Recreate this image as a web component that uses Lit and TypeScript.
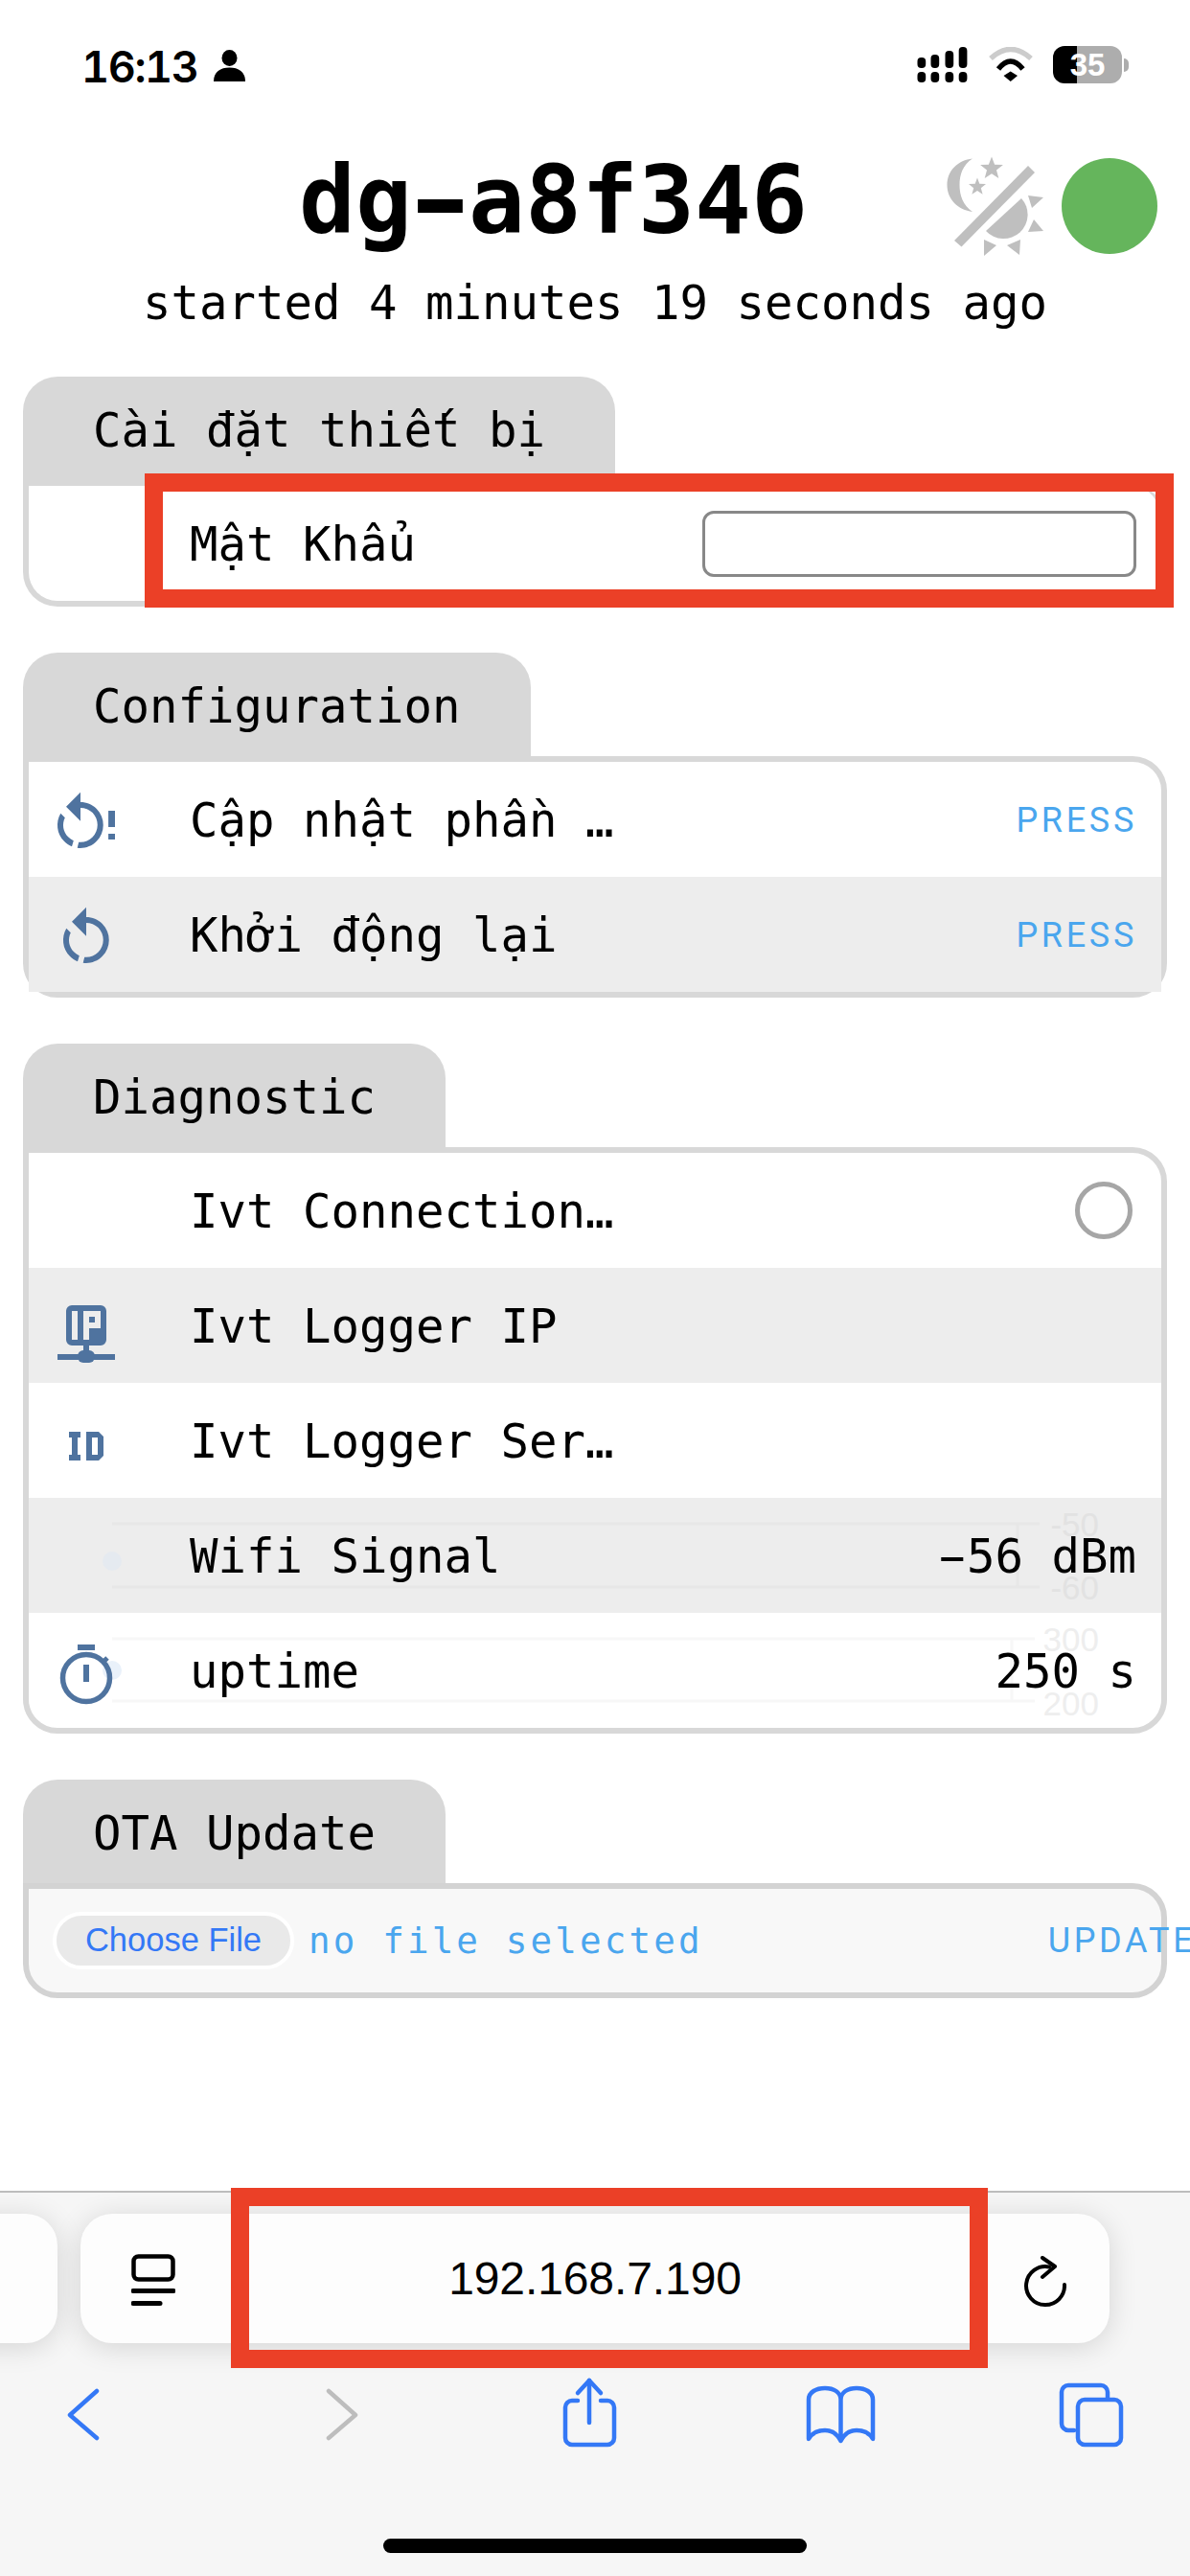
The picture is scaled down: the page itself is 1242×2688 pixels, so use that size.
import { LitElement, html, css, svg } from "lit";
import { customElement } from "lit/decorators.js";

const star = (cx: number, cy: number, r: number) => {
  const pts: string[] = [];
  for (let i = 0; i < 10; i++) {
    const rad = i % 2 ? r * 0.42 : r;
    const a = -Math.PI / 2 + (i * Math.PI) / 5;
    pts.push(`${(cx + rad * Math.cos(a)).toFixed(1)},${(cy + rad * Math.sin(a)).toFixed(1)}`);
  }
  return pts.join(" ");
};

const RESTART =
  "M12,4C14.1,4 16.1,4.8 17.6,6.3C20.7,9.4 20.7,14.5 17.6,17.6C15.8,19.5 13.3,20.2 10.9,19.9L11.4,17.9C13.1,18.1 14.9,17.5 16.2,16.2C18.5,13.9 18.5,10.1 16.2,7.7C15.1,6.6 13.5,6 12,6V10.6L7,5.6L12,0.6V4M6.3,17.6C3.7,15 3.3,11 5.1,7.9L6.6,9.4C5.5,11.6 5.9,14.4 7.8,16.2C8.3,16.7 8.9,17.1 9.6,17.4L9,19.4C8,19 7.1,18.4 6.3,17.6Z";

const icons: Record<string, unknown> = {
  restartAlert: html`<svg class="ic" viewBox="0 0 24 24"><path transform="translate(-2 0)" d=${RESTART}/><path d="M19.7 7H22V12.7H19.7ZM19.7 15H22V17H19.7Z"/></svg>`,
  restart: html`<svg class="ic" viewBox="0 0 24 24"><path d=${RESTART}/></svg>`,
  ip: html`<svg class="ic" viewBox="0 0 72 72"><path fill-rule="evenodd" d="M21 9H51A6 6 0 0 1 57 15V45A6 6 0 0 1 51 51H21A6 6 0 0 1 15 45V15A6 6 0 0 1 21 9ZM21 15V45H27V15ZM33 15V45H39V33H51V15ZM39 21H45V27H39Z"/><rect x="33" y="50" width="6" height="10"/><rect x="6" y="60" width="60" height="6"/><rect x="27" y="56" width="18" height="13" rx="6"/></svg>`,
  id: html`<svg class="ic" viewBox="0 0 72 72"><path fill-rule="evenodd" d="M18 21H30V27H27V45H30V51H18V45H21V27H18ZM36 21H49L54 26V46L49 51H36ZM42 27V45H48V27Z"/></svg>`,
  timer: html`<svg class="ic" viewBox="0 0 72 72"><rect x="27" y="3" width="18" height="6"/><rect x="33" y="24" width="6" height="18"/><circle cx="36" cy="38" r="24.5" fill="none" stroke="#4F739F" stroke-width="5.5"/><path d="M53 22L58 17" stroke="#4F739F" stroke-width="5" fill="none"/></svg>`,
};

const wifiChart = svg`<line x1="87" x2="1055" y1="27" y2="27"/><line x1="87" x2="1055" y1="93" y2="93"/><line x1="1032" x2="1032" y1="27" y2="93"/><circle cx="87" cy="66" r="10" fill="#E5EAF0"/><text x="1117" y="40">-50</text><text x="1117" y="106">-60</text>`;
const upChart = svg`<line x1="87" x2="1050" y1="27" y2="27"/><line x1="87" x2="1050" y1="92" y2="92"/><line x1="1026" x2="1026" y1="27" y2="92"/><circle cx="87" cy="60" r="10" fill="#E9F1FA"/><text x="1117" y="40">300</text><text x="1117" y="107">200</text>`;

@customElement("app-root")
export class AppRoot extends LitElement {
  static styles = css`
    :host {
      display: flex;
      flex-direction: column;
      width: 1242px;
      height: 2688px;
      overflow: hidden;
      background: #fff;
      color: #000;
      font-family: "DejaVu Sans Mono", monospace;
    }
    svg { display: block; flex: none; }

    .status { height: 163px; flex: none; display: flex; box-sizing: border-box; padding: 48px 64px 0 85px; align-items: flex-start; }
    .time { font: 600 45px/37px Inter, sans-serif; font-variant-numeric: tabular-nums; letter-spacing: -1.4px; margin-top: 3px; }
    .person { margin: 4px 0 0 16px; }
    .status-right { margin-left: auto; display: flex; align-items: flex-start; }
    .signal { margin-top: 1px; }
    .wifi { margin: 1px 0 0 21px; }
    .battery {
      margin-left: 20px; width: 72px; height: 39px; border-radius: 12px;
      background: linear-gradient(90deg, #000 35%, #adadad 35%);
      color: #fff; font: 700 33px/39px "Liberation Sans", sans-serif; text-align: center;
    }
    .nub { margin: 13px 0 0 2px; width: 5px; height: 14px; border-radius: 0 7px 7px 0; background: #adadad; }

    .head { display: flex; align-items: center; height: 104px; flex: none; padding: 0 34px 0 312px; }
    .title { margin: 0 0 12px; font-size: 98px; line-height: 104px; font-weight: 700; }
    .dash { display: inline-block; transform: scaleX(1.55); }
    .dash.thin { transform: scaleX(1.85); }
    .head-icons { margin-left: auto; display: flex; align-items: center; gap: 19px; }
    .theme { fill: #bfbfbf; }
    .dot { width: 100px; height: 100px; border-radius: 50%; background: #65b55c; }
    .started { margin: 20px 0 46px; font-size: 49px; line-height: 60px; text-align: center; }

    .sections { display: flex; flex-direction: column; gap: 48px; padding-left: 24px; width: 1194px; flex: 1; }
    .tab {
      width: fit-content; box-sizing: border-box; height: 114px; padding: 0 73px;
      background: #d8d8d8; border-radius: 36px 36px 0 0;
      font-size: 49px; line-height: 114px; white-space: nowrap;
    }
    .panel {
      margin-top: -6px; border: 6px solid #d8d8d8; border-radius: 0 36px 36px 36px;
    }
    .panel.first { margin-top: 0; border-top: 0; }
    .row {
      position: relative; isolation: isolate;
      height: 120px; display: flex; align-items: center; padding-right: 26px;
      font-size: 49px;
    }
    .row:nth-child(even) { background: #ededed; }
    .slot { width: 72px; height: 72px; margin: 12px 72px 0 24px; flex: none; }
    .ic { width: 72px; height: 72px; fill: #4f739f; }
    .label { width: 443px; flex: none; white-space: nowrap; overflow: hidden; text-overflow: ellipsis; line-height: 60px; margin-top: 4px; }
    .right { margin-left: auto; white-space: nowrap; line-height: 60px; margin-top: 4px; }
    .press { font: 400 36px/40px Roboto, sans-serif; letter-spacing: 3.7px; color: #4aa6ee; margin-left: auto; margin-right: -1px; margin-top: 2px; }
    .radio { margin-left: auto; margin-right: 4px; width: 60px; height: 60px; box-sizing: border-box; border: 5px solid #a6a6a6; border-radius: 50%; }
    .pw {
      margin-left: auto; width: 453px; height: 69px; box-sizing: border-box; padding: 0;
      border: 3px solid #888; border-radius: 12px; background: #fff;
    }
    .chart { position: absolute; left: 0; top: 0; width: 1182px; height: 120px; z-index: -1; font: 35px "Liberation Sans", sans-serif; text-anchor: end; }
    .chart line { stroke-width: 3; }
    .chart.dim line { stroke: #e7e7e7; }
    .chart.dim text { fill: #e2e2e2; }
    .chart.lite line { stroke: #f7f7f7; }
    .chart.lite text { fill: #eeeeee; }
    .mark { position: absolute; box-sizing: border-box; border: 19px solid #eb4027; }
    .row .mark { left: 121px; top: -13px; width: 1074px; height: 140px; }

    .ota { border-color: #d3d3d3; background: #f8f8f8; border-top-color: #d3d3d3; }
    .ota-row { height: 108px; display: flex; align-items: center; padding-left: 25px; }
    .choose {
      flex: none; box-sizing: border-box; width: 252px; height: 60px; border: 4px solid #fff; border-radius: 30px;
      background: #e9e9e9; color: #3478f6; text-align: center;
      font: 34.5px/51px "Liberation Sans", sans-serif;
    }
    .nofile { flex: none; margin-left: 15px; font-size: 37.5px; letter-spacing: 3.15px; color: #4aa6ee; white-space: nowrap; }
    .update { flex: none; margin-left: 360px; font: 400 36px/40px Roboto, sans-serif; letter-spacing: 3.7px; color: #4aa6ee; white-space: nowrap; }

    .bar { flex: none; height: 402px; box-sizing: border-box; background: #f6f6f6; border-top: 2px solid #bdbdbd; }
    .url-row { display: flex; gap: 24px; margin: 22px 0 0 -100px; }
    .pill { height: 135px; border-radius: 33px; background: #fdfdfd; box-shadow: 0 4px 30px rgba(0,0,0,.14); flex: none; }
    .pill.side { width: 160px; }
    .pill.main {
      position: relative; width: 1074px; display: grid; grid-template-columns: 1fr auto 1fr; align-items: center;
      padding: 0 49px; box-sizing: border-box;
    }
    .url { font: 48px "Liberation Sans", sans-serif; letter-spacing: -0.1px; }
    .reload { justify-self: end; margin: 7px -4px 0 0; }
    .reader { margin: 5px 0 0 4px; }
    .pill .mark { left: 157px; top: -27px; width: 790px; height: 188px; }
    .tools { display: flex; justify-content: space-between; padding: 35px 63px 0 47px; }
    .tools svg { fill: none; stroke: #3478f6; stroke-width: 4.5; stroke-linecap: round; stroke-linejoin: round; }
    .tools svg.off { stroke: #bdbdbd; }
    .home { width: 442px; height: 15px; border-radius: 8px; background: #000; margin: 89px auto 0; }
  `;

  private row(iconName: string, label: string, right: unknown, chart?: unknown) {
    return html`<div class="row">
      ${chart ?? ""}
      <div class="slot">${iconName ? icons[iconName] : ""}</div>
      <div class="label">${label}</div>
      ${right}
    </div>`;
  }

  render() {
    const press = html`<span class="press">PRESS</span>`;
    return html`
      <div class="status">
        <span class="time">16:13</span>
        <svg class="person" width="33" height="33" viewBox="0 0 33 33"><ellipse cx="16.5" cy="8.5" rx="8" ry="8.5"/><path d="M0 33C0 23 7 18.500 16.500 18.500C26 18.500 33 23 33 33Z"/></svg>
        <div class="status-right">
          <svg class="signal" width="53" height="37" viewBox="0 0 53 37">
            <rect x="0.500" y="26" width="8.700" height="11" rx="4"/><rect x="14.500" y="26" width="8.700" height="11" rx="4"/><rect x="29.500" y="26" width="8.700" height="11" rx="4"/><rect x="43.700" y="26" width="8.700" height="11" rx="4"/>
            <rect x="0.500" y="11" width="8.700" height="11" rx="4"/><rect x="14.500" y="8" width="8.700" height="14" rx="4"/><rect x="29.500" y="4" width="8.700" height="18" rx="4"/><rect x="43.700" y="0" width="8.700" height="22" rx="4"/>
          </svg>
          <svg class="wifi" width="48" height="37" viewBox="0 0 48 37">
            <path d="M3 12Q23.700 -7 45 12" fill="none" stroke="#cccccc" stroke-width="5.500"/>
            <path d="M11 23Q23.700 7 36.500 23" fill="none" stroke="#000" stroke-width="5.500"/>
            <path d="M16.500 30L23.700 25.500L31 30L23.700 36Z"/>
          </svg>
          <div class="battery">35</div>
          <div class="nub"></div>
        </div>
      </div>

      <div class="head">
        <h1 class="title">dg<span class="dash">-</span>a8f346</h1>
        <div class="head-icons">
          <svg class="theme" width="101" height="104" viewBox="0 0 101 104">
            <polygon points="8,88 15.500,94.500 92,17 85,10"/>
            <path d="M27 2.500C12 4 .5 15 .5 30C.5 45 12 56 27 58C17 51 13.500 41 13.500 30C13.500 19 17 9 27 2.500Z"/>
            <polygon points=${star(47, 13, 12.5)}/>
            <polygon points=${star(32, 32, 9.5)}/>
            <path d="M78 44A25 25 0 0 1 41 78Z"/>
            <polygon points="85,41 101,43 89,54"/>
            <polygon points="85,79 101,78 91,66"/>
            <polygon points="39,87 52,93 39,104"/>
            <polygon points="63,93 77,87 76,103"/>
          </svg>
          <div class="dot"></div>
        </div>
      </div>
      <div class="started">started 4 minutes 19 seconds ago</div>

      <div class="sections">
        <section>
          <div class="tab">Cài đặt thiết bị</div>
          <div class="panel first">
            <div class="row">
              <div class="slot"></div>
              <div class="label">Mật Khẩu</div>
              <input class="pw" type="password" />
              <div class="mark"></div>
            </div>
          </div>
        </section>
        <section>
          <div class="tab">Configuration</div>
          <div class="panel">
            ${this.row("restartAlert", "Cập nhật phần mềm", press)}
            ${this.row("restart", "Khởi động lại", press)}
          </div>
        </section>
        <section>
          <div class="tab">Diagnostic</div>
          <div class="panel">
            ${this.row("", "Ivt Connection Status", html`<div class="radio"></div>`)}
            ${this.row("ip", "Ivt Logger IP", "")}
            ${this.row("id", "Ivt Logger Serial", "")}
            ${this.row("", "Wifi Signal", html`<span class="right"><span class="dash thin">-</span>56 dBm</span>`, html`<svg class="chart dim" viewBox="0 0 1182 120">${wifiChart}</svg>`)}
            ${this.row("timer", "uptime", html`<span class="right">250 s</span>`, html`<svg class="chart lite" viewBox="0 0 1182 120">${upChart}</svg>`)}
          </div>
        </section>
        <section>
          <div class="tab">OTA Update</div>
          <div class="panel ota">
            <div class="ota-row">
              <div class="choose">Choose File</div>
              <span class="nofile">no file selected</span>
              <span class="update">UPDATE</span>
            </div>
          </div>
        </section>
      </div>

      <div class="bar">
        <div class="url-row">
          <div class="pill side"></div>
          <div class="pill main">
            <svg class="reader" width="46" height="56" viewBox="0 0 46 56" fill="none" stroke="#000" stroke-width="4.500" stroke-linecap="round">
              <rect x="2.500" y="2.500" width="41" height="24" rx="5"/>
              <path d="M2 38.500H44" stroke-width="5"/><path d="M2 51.500H30" stroke-width="5"/>
            </svg>
            <span class="url">192.168.7.190</span>
            <svg class="reload" width="44" height="54" viewBox="0 0 44 54" fill="none" stroke="#000" stroke-width="4" stroke-linecap="round" stroke-linejoin="round">
              <path d="M26 11.500A20 20 0 1 0 42 30"/>
              <path d="M19 2L32 11L19 22"/>
            </svg>
            <div class="mark"></div>
          </div>
        </div>
        <div class="tools">
          <svg width="80" height="80" viewBox="0 0 80 80"><path d="M54 15L26 40L54 64"/></svg>
          <svg class="off" width="80" height="80" viewBox="0 0 80 80"><path d="M33 15L61 40L33 64"/></svg>
          <svg width="80" height="80" viewBox="0 0 80 80"><path d="M30 25H24A7 7 0 0 0 17 32V64A7 7 0 0 0 24 71H61A7 7 0 0 0 68 64V32A7 7 0 0 0 61 25H54"/><path d="M42 4V48"/><path d="M30 17L42 4L54 17"/></svg>
          <svg width="80" height="80" viewBox="0 0 80 80"><path d="M41.500 24C41.500 16 34 12 25 12C16 12 8 16 8 24V65C12 58 18 56 25 56C32 56 38 60 41.500 67V24C41.500 16 49 12 58 12C67 12 75 16 75 24V65C71 58 65 56 58 56C51 56 45 60 41.500 67"/></svg>
          <svg width="80" height="80" viewBox="0 0 80 80"><path d="M22 56H16A7 7 0 0 1 9 49V16A7 7 0 0 1 16 9H50A7 7 0 0 1 57 16V22"/><rect x="26" y="24" width="45" height="47" rx="7"/></svg>
        </div>
        <div class="home"></div>
      </div>
    `;
  }
}
